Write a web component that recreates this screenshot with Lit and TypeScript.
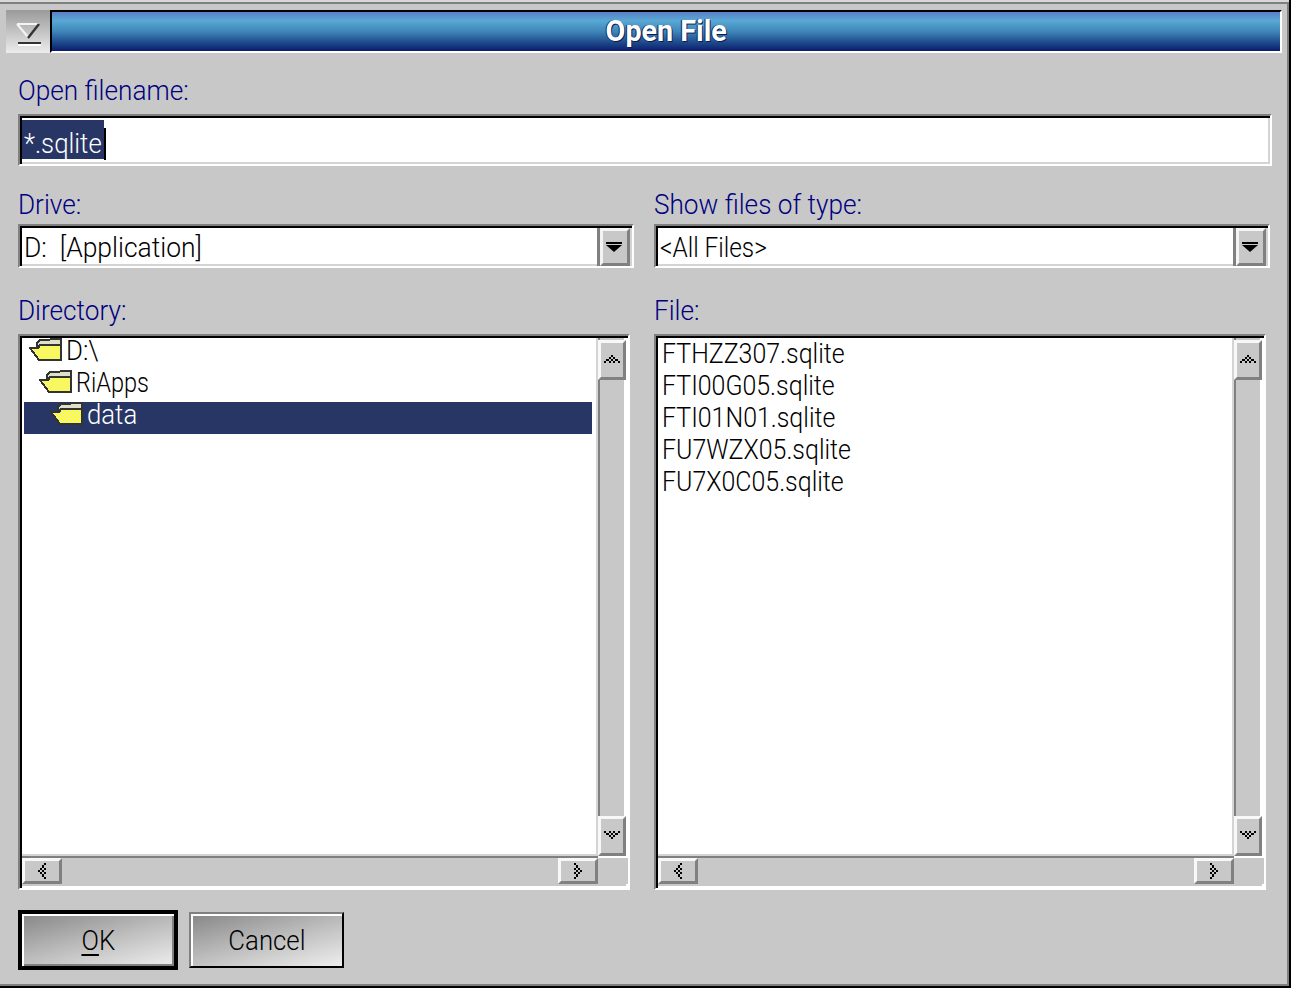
import { LitElement, html, css, svg } from "lit";
import { customElement } from "lit/decorators.js";

const pix = (rows: string[], w: number, h: number) => {
  const vw = rows[0].length * 2;
  const vh = rows.length * 2;
  return html`<svg width=${w} height=${h} viewBox="0 0 ${vw} ${vh}" preserveAspectRatio="none" shape-rendering="crispEdges">
    ${rows.map((r, y) =>
      [...r].map((c, x) => (c === "X" ? svg`<rect x=${x * 2} y=${y * 2} width="2" height="2" fill="#000"></rect>` : null))
    )}
  </svg>`;
};

const UP = ["...X...", "..X.X..", ".X.X.X.", "X.X.X.X"];
const DOWN = ["X.X.X.X", ".X.X.X.", "..X.X..", "...X..."];
const LEFT = ["...X", "..X.", ".X.X", "X.X.", ".X.X", "..X.", "...X"];
const RIGHT = ["X...", ".X..", "X.X.", ".X.X", "X.X.", ".X..", "X..."];

const folder = () => html`<svg class="folder" width="34" height="24" viewBox="0 0 34 24" shape-rendering="crispEdges">
  <defs>
    <pattern id="dither" width="4" height="4" patternUnits="userSpaceOnUse">
      <rect width="4" height="4" fill="#ffff20"></rect>
      <rect width="2" height="2" fill="#f0f0a0"></rect>
      <rect x="2" y="2" width="2" height="2" fill="#f0f0a0"></rect>
    </pattern>
  </defs>
  <path d="M8 5 L11 2 L32 1 L32 22 L10 22 Z" fill="#e0e0c8" stroke="#333" stroke-width="2"></path>
  <path d="M1 10 L9 10 L11 7 L32 7 L32 22 L10 22 Z" fill="url(#dither)" stroke="#333" stroke-width="2"></path>
</svg>`;

const t = (s: string, cls = "") => html`<span class="t ${cls}">${s}</span>`;

@customElement("app-root")
export class AppRoot extends LitElement {
  static styles = css`
    :host {
      display: block;
      width: 1291px;
      height: 988px;
      font-family: "Roboto", "Liberation Sans", sans-serif;
      font-weight: 300;
    }
    * { box-sizing: border-box; }
    .t {
      display: inline-block;
      white-space: pre;
      transform-origin: left center;
      transform: scaleX(0.92);
    }
    .t.s84 { transform: scaleX(0.84); }
    .t.s87 { transform: scaleX(0.87); }
    .t.s89 { transform: scaleX(0.89); }
    .t.s93 { transform: scaleX(0.935); }
    .t.s94 { transform: scaleX(0.945); }
    .t.s99 { transform: scaleX(0.99); }
    .frame {
      width: 1291px;
      height: 988px;
      background: #c8c8c8;
      border-right: 2px solid #000;
      border-bottom: 2px solid #000;
    }
    .window {
      background: #c8c8c8;
      border-top: 2px solid #808080;
      border-right: 2px solid #808080;
      border-bottom: 2px solid #808080;
      display: flex;
      flex-direction: column;
      padding: 0 0 0 18px;
      box-shadow: 0 -2px 0 #d8d8d8;
      position: relative;
      top: 2px;
      height: calc(100% - 2px);
    }
    .title-row {
      display: flex;
      height: 43px;
      margin: 6px 5px 0 -12px;
    }
    .sysbtn {
      width: 44px;
      background: linear-gradient(180deg, #9a9a9a, #ececec);
      flex: none;
    }
    .title {
      flex: 1;
      border-top: 2px solid #000;
      border-left: 2px solid #000;
      border-right: 2px solid #fff;
      border-bottom: 2px solid #fff;
      background: linear-gradient(180deg, #5a80c8 0%, #58a8d4 22%, #3f86b8 50%, #1e4a8c 78%, #0a1c6c 100%);
      display: flex;
      align-items: center;
      justify-content: center;
      color: #fff;
      font-weight: bold;
      font-size: 29px;
      padding-bottom: 2px;
      text-shadow: 1px 1px 0 #0c1c50, -1px 0 0 #0c2a60;
    }
    .title .t { transform-origin: center; }
    .label {
      height: 30px;
      line-height: 32px;
      font-size: 28px;
      color: #000080;
      white-space: pre;
    }
    .label .t { transform-origin: -1px center; }
    .l-open { margin-top: 22px; }
    .sunken {
      border: 2px solid;
      border-color: #808080 #fff #fff #808080;
      background: #fff;
    }
    .input {
      width: 1254px;
      height: 52px;
      margin-top: 9px;
      padding: 4px 0 0 2px;
      display: flex;
      align-items: flex-start;
      box-shadow: inset 2px 2px 0 #000, inset -2px -2px 0 #d4d4d4;
      font-size: 28px;
    }
    .sel {
      background: #283665;
      color: #fff;
      height: 39px;
      width: 82px;
      padding-left: 2px;
      padding-top: 4px;
      line-height: 39px;
    }
    .sel .t { height: 35px; line-height: 39px; }
    .caret {
      width: 2px;
      height: 32px;
      margin-top: 8px;
      background: #000;
    }
    .cols {
      display: grid;
      grid-template-columns: 616px 616px;
      column-gap: 20px;
    }
    .l-top { margin-top: 23px; }
    .l-mid { margin-top: 27px; }
    .combo {
      width: 616px;
      height: 44px;
      margin-top: 5px;
      padding: 2px 2px 2px 4px;
      display: flex;
      box-shadow: inset 2px 2px 0 #000, inset -2px -2px 0 #d4d4d4;
      font-size: 28px;
    }
    .combo-text {
      flex: 1;
      line-height: 40px;
      color: #000;
    }
    .combo-btn {
      width: 30px;
      height: 38px;
      flex: none;
      background: #c8c8c8;
      border: 3px solid;
      border-color: #f4f4f4 #808080 #808080 #f4f4f4;
      box-shadow: -3px 0 0 #808080;
      display: flex;
      align-items: center;
      justify-content: center;
      padding-right: 2px;
    }
    .tri {
      width: 0;
      height: 0;
      border-left: 8px solid transparent;
      border-right: 8px solid transparent;
      border-top: 7px solid #000;
      position: relative;
      margin-top: 2px;
    }
    .tri::before {
      content: "";
      position: absolute;
      left: -8px;
      top: -10px;
      width: 16px;
      height: 2px;
      background: #000;
    }
    .list {
      width: 612px;
      height: 556px;
      margin-top: 9px;
      padding: 2px;
      display: grid;
      grid-template-columns: 576px 28px;
      grid-template-rows: 518px 28px;
      box-shadow: inset 2px 2px 0 #000, inset -2px -2px 0 #fff;
      font-size: 28px;
      background: #c8c8c8;
    }
    .pane {
      background: #fff;
      border-right: 2px solid #d4d4d4;
      border-bottom: 2px solid #d4d4d4;
    }
    .row {
      height: 32px;
      display: flex;
      align-items: center;
      color: #000;
    }
    .row .t { line-height: 32px; }
    .row .t.tree-text { line-height: 24px; margin-bottom: 7px; }
    .row.sel-row {
      background: #283665;
      color: #fff;
      margin: 0 4px 0 2px;
    }
    .files { padding-left: 4px; }
    .folder { flex: none; margin-right: 3px; align-self: flex-start; }
    .d0 { padding-left: 7px; }
    .d1 { padding-left: 17px; }
    .d2 { padding-left: 26px; }
    .vbar {
      display: flex;
      flex-direction: column;
      justify-content: space-between;
      background: #c8c8c8;
      box-shadow: inset 2px 0 0 #808080, inset -2px 0 0 #fff;
      padding-top: 2px;
    }
    .hbar {
      display: flex;
      justify-content: space-between;
      background: #c8c8c8;
      box-shadow: inset 0 2px 0 #808080;
      padding-top: 2px;
    }
    .corner {
      background: #c8c8c8;
      box-shadow: inset 0 2px 0 #fff;
      margin-right: -2px;
    }
    .sb {
      background: #c8c8c8;
      border: 3px solid;
      border-color: #f8f8f8 #808080 #808080 #f8f8f8;
      display: flex;
      align-items: center;
      justify-content: center;
      flex: none;
    }
    .vbar .sb { width: 28px; height: 40px; padding-bottom: 3px; }
    .hbar .sb { width: 40px; height: 26px; }
    .buttons {
      display: flex;
      align-items: center;
      gap: 11px;
      margin-top: 20px;
    }
    .btn {
      border: 2px solid;
      border-color: #808080 #000 #000 #808080;
      display: flex;
      align-items: center;
      justify-content: center;
      font-size: 28px;
      color: #000;
      background: linear-gradient(165deg, #868686 0%, #bcbcbc 50%, #eeeeee 100%);
      box-shadow: inset 2px 2px 0 #fff;
    }
    .btn .t { transform-origin: center; }
    .ok {
      width: 160px;
      height: 60px;
      border: 4px solid #000;
      box-shadow: inset 2px 2px 0 #fff, inset -2px -2px 0 #808080;
    }
    .cancel { width: 155px; height: 56px; }
    u { text-underline-offset: 4px; text-decoration-thickness: 2px; }
  `;

  private hs() {
    return html`<div class="hbar">
      <div class="sb">${pix(LEFT, 8, 16)}</div>
      <div class="sb">${pix(RIGHT, 8, 16)}</div>
    </div>`;
  }

  private vs() {
    return html`<div class="vbar">
      <div class="sb">${pix(UP, 16, 8)}</div>
      <div class="sb">${pix(DOWN, 16, 8)}</div>
    </div>`;
  }

  render() {
    const files = ["FTHZZ307.sqlite", "FTI00G05.sqlite", "FTI01N01.sqlite", "FU7WZX05.sqlite", "FU7X0C05.sqlite"];
    return html`<div class="frame"><div class="window">
      <div class="title-row">
        <div class="sysbtn">
          <svg width="44" height="43" viewBox="0 0 44 43">
            <path d="M11 14 H33 M11 14 L22 27" stroke="#f4f4f4" stroke-width="2" fill="none"></path>
            <path d="M33 14 L22 28" stroke="#333" stroke-width="2.4" fill="none"></path>
            <rect x="12" y="32" width="23" height="2" fill="#333"></rect>
            <rect x="12" y="34" width="23" height="2" fill="#fff"></rect>
          </svg>
        </div>
        <div class="title">${t("Open File", "s99")}</div>
      </div>

      <div class="label l-open">${t("Open filename:", "s93")}</div>
      <div class="sunken input"><span class="sel">${t("*.sqlite")}</span><span class="caret"></span></div>

      <div class="cols">
        <div>
          <div class="label l-top">${t("Drive:", "s93")}</div>
          <div class="sunken combo"><div class="combo-text">${t("D:  [Application]", "s94")}</div><div class="combo-btn"><span class="tri"></span></div></div>
        </div>
        <div>
          <div class="label l-top">${t("Show files of type:", "s93")}</div>
          <div class="sunken combo"><div class="combo-text">${t("<All Files>", "s87")}</div><div class="combo-btn"><span class="tri"></span></div></div>
        </div>
        <div>
          <div class="label l-mid">${t("Directory:", "s93")}</div>
          <div class="sunken list">
            <div class="pane">
              <div class="row d0">${folder()}${t("D:\\", "tree-text")}</div>
              <div class="row d1">${folder()}${t("RiApps", "tree-text s84")}</div>
              <div class="row d2 sel-row">${folder()}${t("data", "tree-text")}</div>
            </div>
            ${this.vs()}
            ${this.hs()}
            <div class="corner"></div>
          </div>
        </div>
        <div>
          <div class="label l-mid">${t("File:", "s93")}</div>
          <div class="sunken list">
            <div class="pane files">
              ${files.map((f) => html`<div class="row">${t(f, "s89")}</div>`)}
            </div>
            ${this.vs()}
            ${this.hs()}
            <div class="corner"></div>
          </div>
        </div>
      </div>

      <div class="buttons">
        <div class="btn ok"><span class="t"><u>O</u>K</span></div>
        <div class="btn cancel">${t("Cancel")}</div>
      </div>
    </div></div>`;
  }
}
